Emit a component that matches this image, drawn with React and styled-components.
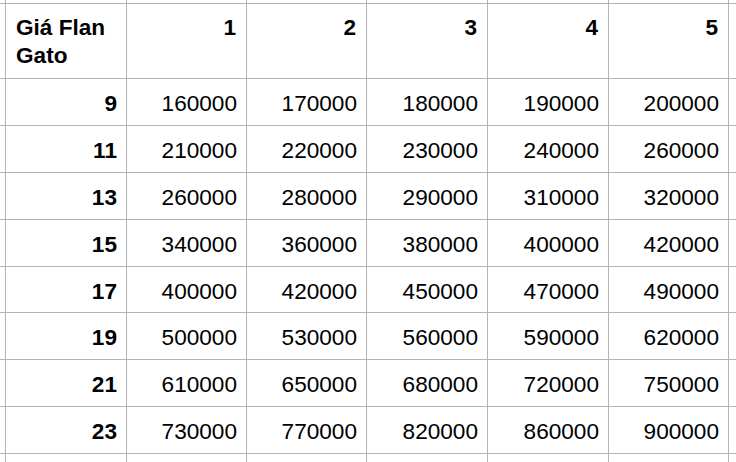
import styled, { createGlobalStyle } from 'styled-components'

const GlobalStyle = createGlobalStyle`
  html, body {
    margin: 0;
    padding: 0;
    background: #ffffff;
  }
`

const cols = ['1', '2', '3', '4', '5']

const rows = [
  { size: 9, prices: [160000, 170000, 180000, 190000, 200000] },
  { size: 11, prices: [210000, 220000, 230000, 240000, 260000] },
  { size: 13, prices: [260000, 280000, 290000, 310000, 320000] },
  { size: 15, prices: [340000, 360000, 380000, 400000, 420000] },
  { size: 17, prices: [400000, 420000, 450000, 470000, 490000] },
  { size: 19, prices: [500000, 530000, 560000, 590000, 620000] },
  { size: 21, prices: [610000, 650000, 680000, 720000, 750000] },
  { size: 23, prices: [730000, 770000, 820000, 860000, 900000] },
]

const App = () => {
  return (
    <>
      <GlobalStyle />
      <Page>
        <Sheet>
          {/* edge row above the header, mostly out of view */}
          <Cell />
          <Cell />
          {cols.map((c) => <Cell key={'t' + c} />)}
          <Cell />

          <Cell />
          <Cell $head $left>Giá Flan<br />Gato</Cell>
          {cols.map((c) => (
            <Cell key={'h' + c} $head>{c}</Cell>
          ))}
          <Cell />

          {rows.map((r) => (
            <Row key={r.size} size={r.size} prices={r.prices} />
          ))}

          <Cell />
          <Cell />
          {cols.map((c) => <Cell key={'b' + c} />)}
          <Cell />
        </Sheet>
      </Page>
    </>
  )
}
export default App;

const Row = ({ size, prices }) => (
  <>
    <Cell />
    <Cell $bold>{size}</Cell>
    {prices.map((p, i) => (
      <Cell key={i}>{p}</Cell>
    ))}
    <Cell />
  </>
)

const Page = styled.div`
width: 736px;
height: 462px;
overflow: hidden;
background: #ffffff;
`
const Sheet = styled.div`
display: grid;
grid-template-columns: 20px 120px 119px 119px 120px 120px 119px 100px;
grid-template-rows: 10px 74px repeat(8, 45.9px) 30px;
gap: 1px;
width: max-content;
margin: -7px 0 0 -15px;
background: #b4b4b4;
`
const Cell = styled.div`
display: flex;
align-items: ${({ $head }) => ($head ? 'flex-start' : 'center')};
justify-content: ${({ $left }) => ($left ? 'flex-start' : 'flex-end')};
text-align: ${({ $left }) => ($left ? 'left' : 'right')};
padding: ${({ $head, $left }) =>
  $head ? `10px 10px 0 ${$left ? '10px' : '0'}` : '4px 9px 0 0'};
background: #ffffff;
color: #000000;
font-family: "Liberation Sans", Arial, sans-serif;
font-size: 22.6px;
line-height: 28px;
font-weight: ${({ $head, $bold }) => ($head || $bold ? 700 : 400)};
white-space: nowrap;
overflow: hidden;
`
